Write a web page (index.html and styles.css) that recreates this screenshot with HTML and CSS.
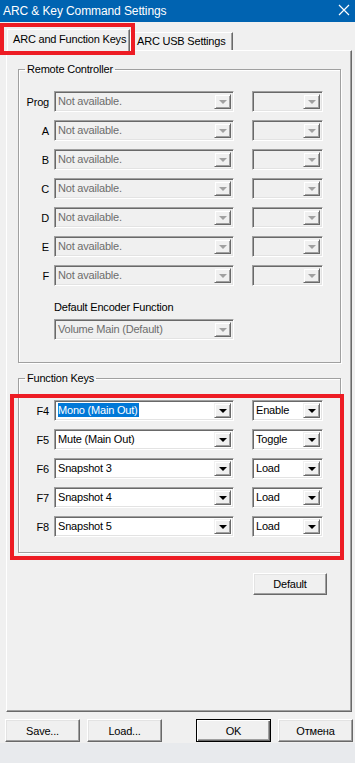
FILE: index.html
```html
<!DOCTYPE html>
<html lang="en">
<head>
    <meta charset="UTF-8">
    <meta name="viewport" content="width=device-width, initial-scale=1.0">
    <title>ARC &amp; Key Command Settings</title>
    <link rel="stylesheet" href="styles.css">
</head>
<body>
    <div class="window">
        <div class="titlebar">
            <span class="title">ARC &amp; Key Command Settings</span>
            <svg class="close" width="12" height="12" viewBox="0 0 12 12">
                <path d="M1 1 L11 11 M11 1 L1 11" stroke="#fff" stroke-width="1.2" fill="none"/>
            </svg>
        </div>

        <div class="tabs">
            <div class="tab tab-active">ARC and Function Keys
                <div class="mark mark-tab"></div>
            </div>
            <div class="tab">ARC USB Settings</div>
        </div>

        <div class="panel">
            <fieldset class="group group-remote">
                <legend>Remote Controller</legend>
                <div class="row">
                    <span class="key">Prog</span>
                    <div class="combo combo-off combo-wide"><span class="combo-text">Not available.</span><span class="combo-btn"><i class="arrow"></i></span></div>
                    <div class="combo combo-off combo-small"><span class="combo-text"></span><span class="combo-btn"><i class="arrow"></i></span></div>
                </div>
                <div class="row">
                    <span class="key">A</span>
                    <div class="combo combo-off combo-wide"><span class="combo-text">Not available.</span><span class="combo-btn"><i class="arrow"></i></span></div>
                    <div class="combo combo-off combo-small"><span class="combo-text"></span><span class="combo-btn"><i class="arrow"></i></span></div>
                </div>
                <div class="row">
                    <span class="key">B</span>
                    <div class="combo combo-off combo-wide"><span class="combo-text">Not available.</span><span class="combo-btn"><i class="arrow"></i></span></div>
                    <div class="combo combo-off combo-small"><span class="combo-text"></span><span class="combo-btn"><i class="arrow"></i></span></div>
                </div>
                <div class="row">
                    <span class="key">C</span>
                    <div class="combo combo-off combo-wide"><span class="combo-text">Not available.</span><span class="combo-btn"><i class="arrow"></i></span></div>
                    <div class="combo combo-off combo-small"><span class="combo-text"></span><span class="combo-btn"><i class="arrow"></i></span></div>
                </div>
                <div class="row">
                    <span class="key">D</span>
                    <div class="combo combo-off combo-wide"><span class="combo-text">Not available.</span><span class="combo-btn"><i class="arrow"></i></span></div>
                    <div class="combo combo-off combo-small"><span class="combo-text"></span><span class="combo-btn"><i class="arrow"></i></span></div>
                </div>
                <div class="row">
                    <span class="key">E</span>
                    <div class="combo combo-off combo-wide"><span class="combo-text">Not available.</span><span class="combo-btn"><i class="arrow"></i></span></div>
                    <div class="combo combo-off combo-small"><span class="combo-text"></span><span class="combo-btn"><i class="arrow"></i></span></div>
                </div>
                <div class="row">
                    <span class="key">F</span>
                    <div class="combo combo-off combo-wide"><span class="combo-text">Not available.</span><span class="combo-btn"><i class="arrow"></i></span></div>
                    <div class="combo combo-off combo-small"><span class="combo-text"></span><span class="combo-btn"><i class="arrow"></i></span></div>
                </div>
                <div class="encoder">
                    <div class="encoder-label">Default Encoder Function</div>
                    <div class="combo combo-off combo-wide"><span class="combo-text">Volume Main (Default)</span><span class="combo-btn"><i class="arrow"></i></span></div>
                </div>
            </fieldset>

            <fieldset class="group group-keys">
                <legend>Function Keys</legend>
                <div class="mark mark-keys"></div>
                <div class="row">
                    <span class="key">F4</span>
                    <div class="combo combo-wide"><span class="combo-text"><span class="selected">Mono (Main Out)</span></span><span class="combo-btn"><i class="arrow"></i></span></div>
                    <div class="combo combo-small"><span class="combo-text">Enable</span><span class="combo-btn"><i class="arrow"></i></span></div>
                </div>
                <div class="row">
                    <span class="key">F5</span>
                    <div class="combo combo-wide"><span class="combo-text">Mute (Main Out)</span><span class="combo-btn"><i class="arrow"></i></span></div>
                    <div class="combo combo-small"><span class="combo-text">Toggle</span><span class="combo-btn"><i class="arrow"></i></span></div>
                </div>
                <div class="row">
                    <span class="key">F6</span>
                    <div class="combo combo-wide"><span class="combo-text">Snapshot 3</span><span class="combo-btn"><i class="arrow"></i></span></div>
                    <div class="combo combo-small"><span class="combo-text">Load</span><span class="combo-btn"><i class="arrow"></i></span></div>
                </div>
                <div class="row">
                    <span class="key">F7</span>
                    <div class="combo combo-wide"><span class="combo-text">Snapshot 4</span><span class="combo-btn"><i class="arrow"></i></span></div>
                    <div class="combo combo-small"><span class="combo-text">Load</span><span class="combo-btn"><i class="arrow"></i></span></div>
                </div>
                <div class="row">
                    <span class="key">F8</span>
                    <div class="combo combo-wide"><span class="combo-text">Snapshot 5</span><span class="combo-btn"><i class="arrow"></i></span></div>
                    <div class="combo combo-small"><span class="combo-text">Load</span><span class="combo-btn"><i class="arrow"></i></span></div>
                </div>
            </fieldset>

            <div class="panel-actions">
                <button class="btn btn-default">Default</button>
            </div>
        </div>

        <div class="footer">
            <button class="btn">Save...</button>
            <button class="btn">Load...</button>
            <button class="btn btn-ok">OK</button>
            <button class="btn">Отмена</button>
        </div>
    </div>
</body>
</html>
```

FILE: styles.css
```css
html, body {
    margin: 0;
    padding: 0;
}
body {
    width: 355px;
    height: 763px;
    background: #e8eaed;
    font-family: "Liberation Sans", Arial, sans-serif;
    font-size: 11px;
    letter-spacing: -0.2px;
    color: #000;
    overflow: hidden;
}
.window {
    height: 743px;
    background: #f0f0f0;
}

/* title bar */
.titlebar {
    height: 22px;
    background: #0063b1;
    color: #fff;
    display: flex;
    align-items: center;
    justify-content: space-between;
    padding: 0 5px 0 3px;
}
.title {
    font-size: 12px;
    letter-spacing: -0.1px;
}
.close {
    display: block;
    margin-top: -2px;
}

/* tabs */
.tabs {
    height: 28px;
    display: flex;
    align-items: flex-end;
    padding-left: 7px;
    position: relative;
    z-index: 1;
}
.tab {
    box-sizing: border-box;
    height: 18px;
    line-height: 16px;
    padding: 0 6px;
    border: 1px solid;
    border-color: #fff #696969 transparent #fff;
    border-bottom: none;
    box-shadow: inset -1px 0 #a0a0a0;
    margin-bottom: 0;
}
.tab-active {
    position: relative;
    height: 22px;
    line-height: 18px;
    width: 123px;
    padding: 0 0 0 5px;
    margin-bottom: -1px;
    background: #f0f0f0;
}

/* red highlight marks */
.mark {
    position: absolute;
    border: 4px solid #ed1c24;
    box-sizing: border-box;
    pointer-events: none;
}
.mark-tab {
    left: -8px;
    top: -7px;
    width: 135px;
    height: 32px;
}
.mark-keys {
    left: -9px;
    top: 9px;
    width: 334px;
    height: 166px;
}

/* tab page */
.panel {
    box-sizing: border-box;
    margin-left: 6px;
    width: 346px;
    height: 662px;
    border: 1px solid;
    border-color: #fff #696969 #696969 #fff;
    box-shadow: inset -1px -1px #a0a0a0;
    padding: 11px 0 0 11px;
}

.group {
    position: relative;
    box-sizing: border-box;
    width: 323px;
    margin: 0;
    min-inline-size: 0;
    border: 1px solid #a0a0a0;
    box-shadow: inset 1px 1px #fff, 1px 1px #fff;
    padding: 0;
}
.group legend {
    margin-left: 6px;
    padding: 0 2px;
    line-height: 14px;
}
.group-remote {
    padding: 15px 0 22px;
}
.group-keys {
    margin-top: 8px;
    padding: 15px 0 15px;
}

.row {
    display: flex;
    align-items: center;
    height: 21px;
    margin-bottom: 8px;
}
.row:last-of-type {
    margin-bottom: 0;
}
.key {
    width: 30px;
    text-align: right;
    margin-right: 5px;
}

/* combobox */
.combo {
    box-sizing: border-box;
    display: flex;
    height: 21px;
    border: 1px solid;
    border-color: #a0a0a0 #fff #fff #a0a0a0;
    box-shadow: inset 1px 1px #696969, inset -1px -1px #e3e3e3;
    padding: 2px;
    background: #fff;
}
.combo-wide {
    width: 180px;
}
.combo-small {
    width: 71px;
    margin-left: 18px;
}
.combo-text {
    flex: 1;
    line-height: 15px;
    padding-left: 1px;
    white-space: nowrap;
    overflow: hidden;
}
.combo-off {
    background: #f0f0f0;
    color: #6d6d6d;
}
.combo-btn {
    box-sizing: border-box;
    width: 17px;
    height: 15px;
    border: 1px solid;
    border-color: #f0f0f0 #696969 #696969 #f0f0f0;
    box-shadow: inset 1px 1px #fff, inset -1px -1px #a0a0a0;
    background: #f0f0f0;
    display: flex;
    align-items: center;
    justify-content: center;
}
.arrow {
    width: 0;
    height: 0;
    border-left: 4px solid transparent;
    border-right: 4px solid transparent;
    border-top: 4px solid #000;
    margin-top: 1px;
}
.combo-off .arrow {
    border-top-color: #a0a0a0;
}
.selected {
    background: #0078d7;
    color: #fff;
    padding: 1px 1px 1px 0;
}

.encoder {
    padding-left: 35px;
    margin-top: 14px;
}
.encoder-label {
    line-height: 14px;
    margin-bottom: 5px;
}

/* buttons */
.btn {
    box-sizing: border-box;
    height: 23px;
    width: 75px;
    font-family: inherit;
    font-size: 11px;
    letter-spacing: -0.2px;
    color: #000;
    background: #f0f0f0;
    border: 1px solid;
    border-color: #fff #696969 #696969 #fff;
    box-shadow: inset -1px -1px #a0a0a0, inset 1px 1px #e3e3e3;
    padding: 0;
}
.btn-ok {
    border-color: #000;
    box-shadow: inset 1px 1px #fff, inset -1px -1px #696969, inset -2px -2px #a0a0a0;
    margin-left: 27px;
}
.panel-actions {
    display: flex;
    justify-content: flex-end;
    padding-right: 24px;
    margin-top: 20px;
}
.btn-default {
    height: 22px;
    width: 74px;
}

.footer {
    display: flex;
    gap: 7px;
    padding: 7px 0 0 5px;
}
```
